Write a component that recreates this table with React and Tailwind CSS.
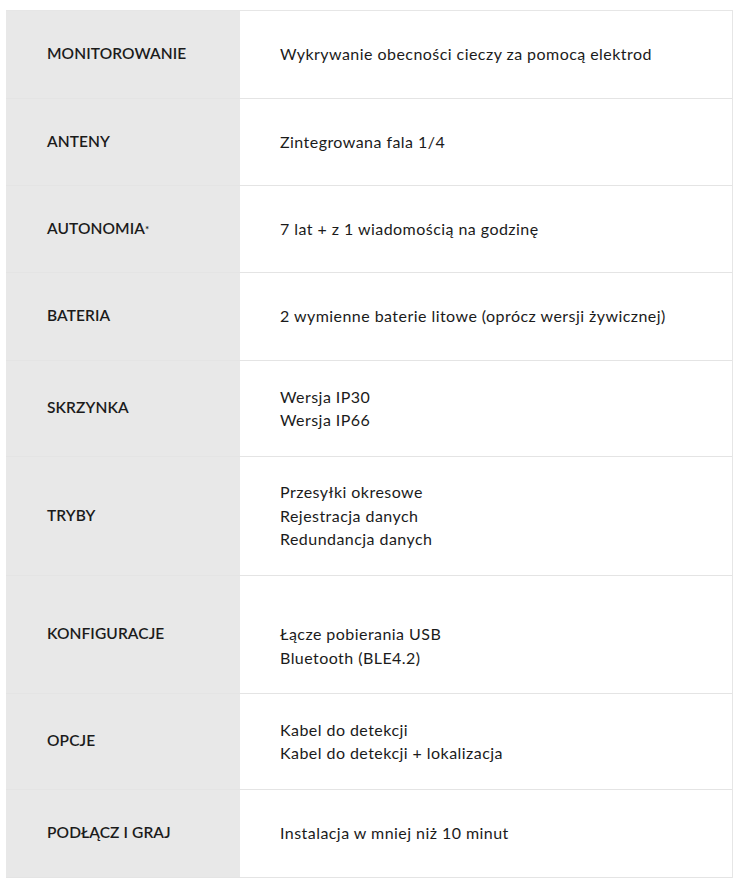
import React from "react";

const rows = [
  { label: "MONITOROWANIE", h: "h-[88px]", lines: ["Wykrywanie obecności cieczy za pomocą elektrod"] },
  { label: "ANTENY", h: "h-[87px]", lines: ["Zintegrowana fala 1/4"] },
  { label: "AUTONOMIA", sup: true, h: "h-[87px]", lines: ["7 lat + z 1 wiadomością na godzinę"] },
  { label: "BATERIA", h: "h-[88px]", lines: ["2 wymienne baterie litowe (oprócz wersji żywicznej)"] },
  { label: "SKRZYNKA", h: "h-[96px]", lines: ["Wersja IP30", "Wersja IP66"] },
  { label: "TRYBY", h: "h-[119px]", lines: ["Przesyłki okresowe", "Rejestracja danych", "Redundancja danych"] },
  { label: "KONFIGURACJE", h: "h-[118px]", lines: ["\u00a0", "Łącze pobierania USB", "Bluetooth (BLE4.2)"] },
  { label: "OPCJE", h: "h-[96px]", lines: ["Kabel do detekcji", "Kabel do detekcji + lokalizacja"] },
  { label: "PODŁĄCZ I GRAJ", h: "h-[88px]", lines: ["Instalacja w mniej niż 10 minut"] },
];

export default function App() {
  return (
    <div className="min-h-screen bg-white pt-[10px] pl-[6px] pr-[8px] text-[#1b1b1b]" style={{ fontFamily: "Lato, 'Open Sans', sans-serif" }}>
      <div className="border-t border-r border-[#e6e6e6] w-[727px]">
        {rows.map((r, i) => (
          <div key={i} className={`flex ${r.h} border-b border-[#e4e4e4]`}>
            <div className="w-[234px] shrink-0 bg-[#e8e8e8] flex items-center pl-[41px] pb-[1px] text-[15.5px] font-semibold tracking-[0.1px]">
              <span>
                {r.label}
                {r.sup && <sup className="text-[10px] relative -top-[1px]">*</sup>}
              </span>
            </div>
            <div className="flex-1 flex flex-col justify-center pl-[40px] pb-[1px] text-[16px] leading-[23.5px] tracking-[0.45px]">
              {r.lines.map((l, j) => (
                <div key={j}>{l}</div>
              ))}
            </div>
          </div>
        ))}
      </div>
    </div>
  );
}
